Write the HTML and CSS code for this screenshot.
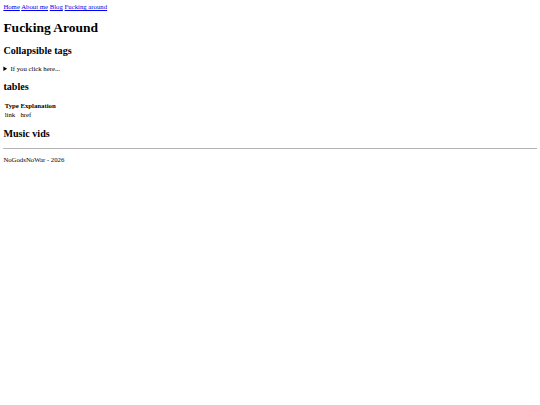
FILE: index.html
```html
<!DOCTYPE html>
<html lang="en">
<head>
<meta charset="utf-8">
<title>Fucking Around</title>
<link rel="stylesheet" href="styles.css">
</head>
<body class="page">
<nav class="nav">
<a class="nav-link" href="#">Home</a>
<a class="nav-link" href="#">About me</a>
<a class="nav-link" href="#">Blog</a>
<a class="nav-link" href="#">Fucking around</a>
</nav>
<main class="content">
<h1 class="title">Fucking Around</h1>
<h2 class="section">Collapsible tags</h2>
<details class="collapse">
<summary class="collapse-summary">If you click here...</summary>
</details>
<h2 class="section">tables</h2>
<table class="data">
<tr><th class="cell head">Type</th><th class="cell head">Explanation</th></tr>
<tr><td class="cell">link</td><td class="cell">href</td></tr>
</table>
<h2 class="section">Music vids</h2>
</main>
<footer class="footer">
<hr class="rule">
<p class="credit">NoGodsNoWar - 2026</p>
</footer>
</body>
</html>
```
FILE: styles.css
```css
.page {
  margin: 3.375px;
  font-family: "Liberation Serif", "Times New Roman", serif;
  font-size: 6.75px;
  line-height: 1.15;
  color: #000;
  background: #fff;
}
.nav-link {
  color: #0000ee;
  text-decoration: underline;
}
.title {
  font-size: 2em;
  margin: 0.67em 0;
  font-weight: bold;
}
.section {
  font-size: 1.5em;
  margin: 0.83em 0;
  font-weight: bold;
}
.collapse {
  display: block;
}
.collapse-summary {
  display: list-item;
  cursor: pointer;
}
.data {
  border-collapse: separate;
  border-spacing: 1px;
  font-size: 1em;
}
.cell {
  padding: 0 0.3px;
  text-align: left;
}
.head {
  font-weight: bold;
  text-align: center;
}
.rule {
  margin: 0.5em 0;
  border: 0;
  border-top: 1px solid #b4b4b4;
  height: 0;
}
.credit {
  margin: 1em 0;
}
```
